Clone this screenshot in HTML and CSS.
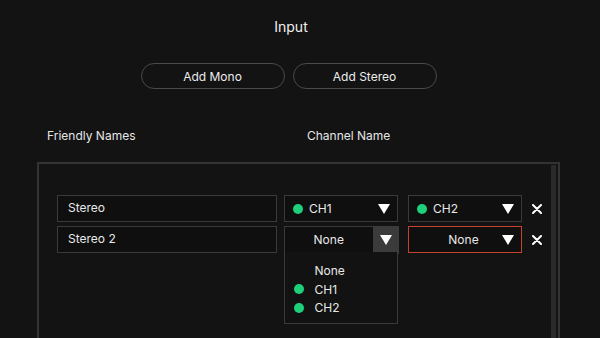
FILE: index.html
```html
<!DOCTYPE html>
<html>
<head>
<meta charset="utf-8">
<link rel="stylesheet" href="styles.css">
</head>
<body>
<div class="page">
  <h1 class="title">Input</h1>
  <div class="actions">
    <button class="pill">Add Mono</button>
    <button class="pill">Add Stereo</button>
  </div>
  <div class="labels">
    <span class="label-name">Friendly Names</span>
    <span class="label-chan">Channel Name</span>
  </div>
  <div class="panel">
    <div class="rows">
      <div class="row">
        <div class="field">Stereo</div>
        <div class="select">
          <span class="dot"></span><span class="sel-text">CH1</span>
          <svg class="caret" viewBox="0 0 12 10"><path d="M0 0H12L6 10Z" fill="#fff"/></svg>
        </div>
        <div class="select">
          <span class="dot"></span><span class="sel-text">CH2</span>
          <svg class="caret" viewBox="0 0 12 10"><path d="M0 0H12L6 10Z" fill="#fff"/></svg>
        </div>
        <svg class="remove" viewBox="0 0 10 10"><path d="M1 1L9 9M9 1L1 9" stroke="#fff" stroke-width="2" stroke-linecap="round"/></svg>
      </div>
      <div class="row">
        <div class="field">Stereo 2</div>
        <div class="select open">
          <span class="sel-center">None</span>
          <span class="caret-box"><svg class="caret" viewBox="0 0 12 10"><path d="M0 0H12L6 10Z" fill="#fff"/></svg></span>
          <div class="menu">
            <div class="opt"><span class="dot hidden"></span>None</div>
            <div class="opt"><span class="dot"></span>CH1</div>
            <div class="opt"><span class="dot"></span>CH2</div>
          </div>
        </div>
        <div class="select error">
          <span class="sel-center">None</span>
          <svg class="caret" viewBox="0 0 12 10"><path d="M0 0H12L6 10Z" fill="#fff"/></svg>
        </div>
        <svg class="remove" viewBox="0 0 10 10"><path d="M1 1L9 9M9 1L1 9" stroke="#fff" stroke-width="2" stroke-linecap="round"/></svg>
      </div>
    </div>
    <div class="scrollbar"></div>
  </div>
</div>
</body>
</html>
```
FILE: styles.css
```css
* { box-sizing: border-box; }
html, body {
  margin: 0;
  padding: 0;
  background: #131313;
  color: #eaeaea;
  font-family: Inter, "Noto Sans", sans-serif;
  overflow: hidden;
}
.page {
  width: 600px;
  height: 338px;
  display: flex;
  flex-direction: column;
}
.title {
  margin: 17px 18px 0 0;
  font-size: 14px;
  font-weight: 400;
  line-height: 20px;
  text-align: center;
  color: #f0f0f0;
}
.actions {
  display: flex;
  justify-content: center;
  gap: 8px;
  margin-top: 26px;
  padding-right: 23px;
}
.pill {
  width: 144px;
  height: 26px;
  border: 1.5px solid #4a4a4a;
  border-radius: 13px;
  background: transparent;
  color: #ececec;
  font-family: Inter, "Noto Sans", sans-serif;
  font-size: 12px;
  padding: 0;
}
.labels {
  display: flex;
  margin-top: 38px;
  padding-left: 47px;
  font-size: 12px;
  line-height: 18px;
  color: #e6e6e6;
}
.label-name { width: 260px; }
.panel {
  position: relative;
  margin: 17px 0 0 37px;
  width: 523px;
  flex: 1;
  border: 2px solid #333;
  border-bottom: none;
  padding: 31px 0 0 18px;
}
.rows {
  display: flex;
  flex-direction: column;
  gap: 4px;
}
.row {
  display: flex;
  align-items: center;
  height: 27px;
}
.field {
  width: 220px;
  height: 27px;
  border: 1.5px solid #3a3a3a;
  background: #0f0f0f;
  font-size: 12px;
  line-height: 24px;
  padding-left: 10px;
  color: #e8e8e8;
  margin-right: 7px;
}
.select {
  position: relative;
  width: 114px;
  height: 27px;
  border: 1.5px solid #3a3a3a;
  background: #0f0f0f;
  display: flex;
  align-items: center;
  padding: 0 7px 0 8px;
  font-size: 12px;
  color: #e8e8e8;
  margin-right: 10px;
}
.dot {
  width: 10px;
  height: 10px;
  border-radius: 50%;
  background: #1fd07a;
  margin-right: 6px;
  flex: none;
}
.dot.hidden { visibility: hidden; }
.sel-text { flex: 1; }
.sel-center { flex: 1; text-align: center; padding-left: 8px; }
.caret {
  width: 12px;
  height: 10px;
  flex: none;
}
.select.error {
  border-color: #c5432c;
}
.select.open {
  padding: 0;
}
.select.open .sel-center { padding-left: 0; }
.caret-box {
  width: 26px;
  align-self: stretch;
  background: #3b3b3b;
  display: flex;
  align-items: center;
  justify-content: center;
  margin: -1.5px -1.5px -1.5px 0;
}
.menu {
  position: absolute;
  left: -1.5px;
  top: 24.5px;
  width: 114px;
  height: 72px;
  border: 1.5px solid #3a3a3a;
  border-top: none;
  background: #121212;
  padding: 10px 0 0 9px;
  z-index: 2;
}
.opt {
  display: flex;
  align-items: center;
  height: 18.5px;
  font-size: 12px;
  color: #e8e8e8;
}
.opt .dot { margin-right: 11px; }
.remove {
  width: 10px;
  height: 10px;
  margin-left: 0;
}
.scrollbar {
  position: absolute;
  right: 2px;
  top: 1px;
  bottom: 0;
  width: 5px;
  background: #2a2a2a;
}
```
